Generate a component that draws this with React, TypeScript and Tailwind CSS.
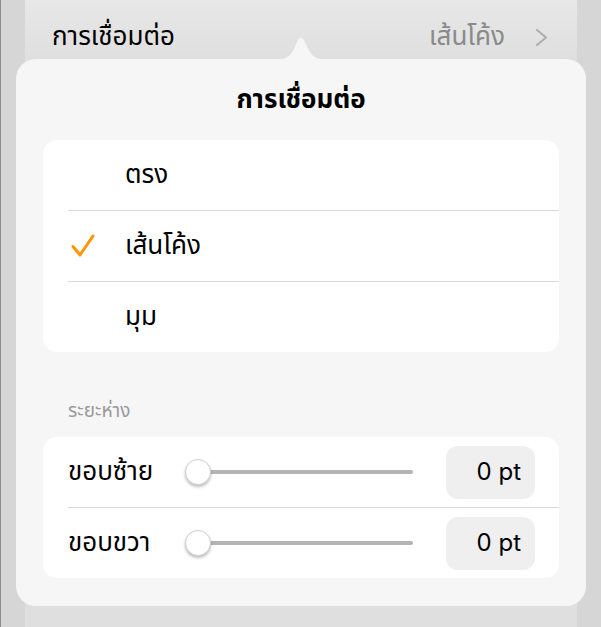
import React from 'react';

const thai = { fontFamily: '"Noto Sans Thai", "Noto Sans", "DejaVu Sans", sans-serif' };

function Check() {
  return (
    <svg width="24" height="24" viewBox="0 0 24 24" fill="none">
      <path d="M2 12.5 L9 21 L22 2" stroke="#ff9500" strokeWidth="3" strokeLinecap="round" strokeLinejoin="round" />
    </svg>
  );
}

function Slider() {
  return (
    <div className="relative flex items-center w-[228px] h-[28px]">
      <div className="w-full h-[4px] rounded-full bg-[#b4b4b4]" />
      <div className="absolute left-0 top-[1px] w-[26px] h-[26px] rounded-full bg-white border border-[#d0d0d0] shadow-[0_2px_3px_rgba(0,0,0,0.25)]" />
    </div>
  );
}

const styles = ['ตรง', 'เส้นโค้ง', 'มุม'];
const margins = ['ขอบซ้าย', 'ขอบขวา'];

export default function App() {
  const selected = 'เส้นโค้ง';

  return (
    <div className="relative w-[601px] h-[627px] overflow-hidden bg-[#d5d6d5] border-l border-[#8e8e8e]" style={thai}>
      {/* dimmed list behind the popover */}
      <div className="ml-[24px] w-[552px] h-full bg-[#dedfde]">
        <div className="ml-[25px] h-[2px] bg-[#a9aaa9]" />
        <div className="flex items-center justify-between h-[72px] pl-[27px] pr-[29px] pt-[2px] bg-gradient-to-b from-[#e8e8e8] to-[#dcdddc] -mt-[2px]">
          <span className="text-[26px] leading-[34px] text-black">การเชื่อมต่อ</span>
          <div className="flex items-center gap-[30px]">
            <span className="text-[26px] leading-[34px] text-[#8a8a8a]">เส้นโค้ง</span>
            <svg width="13" height="17" viewBox="0 0 13 17" fill="none">
              <path d="M2 1 L11 8.5 L2 16" stroke="#adadad" strokeWidth="2" strokeLinecap="round" strokeLinejoin="round" />
            </svg>
          </div>
        </div>
      </div>

      {/* popover arrow */}
      <svg className="absolute left-[270px] top-[36px]" width="60" height="24" viewBox="0 0 60 24">
        <path d="M0 24 C14 24 18 21 22 15 L27 4 Q30 -1 33 4 L38 15 C42 21 46 24 60 24 Z" fill="#f6f6f6" />
      </svg>

      {/* popover */}
      <div className="absolute left-[15px] top-[59px] w-[570px] h-[547px] rounded-[20px] bg-[#f6f6f6] px-[27px]">
        <div className="flex items-center justify-center h-[81px] text-[26px] leading-[34px] font-bold text-black">การเชื่อมต่อ</div>

        <div className="rounded-[14px] bg-white">
          {styles.map((s, i) => (
            <div key={s}>
              {i > 0 && <div className="ml-[25px] h-px bg-[#d9d9d9]" />}
              <div className="flex items-center h-[70px]">
                <div className="w-[82px] flex justify-end pr-[30px]">{s === selected && <Check />}</div>
                <span className="text-[26px] leading-[34px] text-black">{s}</span>
              </div>
            </div>
          ))}
        </div>

        <div className="pt-[48px] pl-[25px] mb-[13px] text-[19px] leading-[24px] text-[#9a9a9a]">ระยะห่าง</div>

        <div className="rounded-[14px] bg-white">
          {margins.map((m, i) => (
            <div key={m}>
              {i > 0 && <div className="ml-[25px] h-px bg-[#d9d9d9]" />}
              <div className="flex items-center h-[70px] pl-[25px] pr-[24px]">
                <span className="w-[117px] text-[26px] leading-[34px] text-black">{m}</span>
                <Slider />
                <div className="ml-auto flex items-center justify-end w-[89px] h-[53px] rounded-[12px] bg-[#efeff0] pr-[14px] text-[24px] text-black" style={{ fontFamily: 'Inter, "Liberation Sans", sans-serif' }}>
                  0 pt
                </div>
              </div>
            </div>
          ))}
        </div>
      </div>
    </div>
  );
}
